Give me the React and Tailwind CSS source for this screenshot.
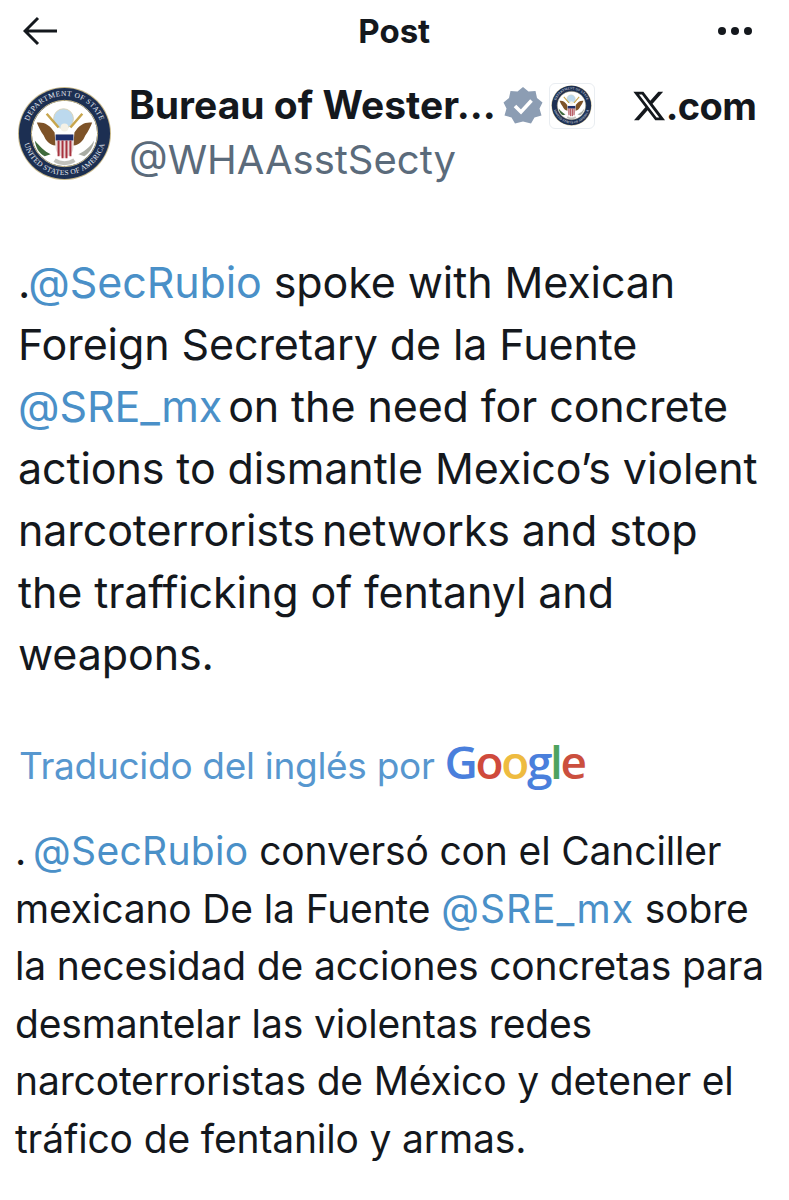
const SANS = "font-['Inter','Liberation_Sans',sans-serif]";

function Seal({ size, uid }) {
  return (
    <svg width={size} height={size} viewBox="0 0 96 96">
      <circle cx="48" cy="48" r="47" fill="#c9b98a" />
      <circle cx="48" cy="48" r="46" fill="#1c2f52" />
      <circle cx="48" cy="48" r="33" fill="#ffffff" />
      <circle cx="48" cy="48" r="33.5" fill="none" stroke="#c9b98a" strokeWidth="1" />
      <defs>
        <path id={`${uid}-top`} d="M 10 48 A 38 38 0 0 1 86 48" />
        <path id={`${uid}-bot`} d="M 6 48 A 42 42 0 0 0 90 48" />
      </defs>
      <text fontSize="7.5" fill="#e8ecf2" fontFamily="Liberation Serif, serif" letterSpacing="0.5">
        <textPath href={`#${uid}-top`} startOffset="50%" textAnchor="middle">DEPARTMENT OF STATE</textPath>
      </text>
      <text fontSize="7.5" fill="#e8ecf2" fontFamily="Liberation Serif, serif" letterSpacing="0.3">
        <textPath href={`#${uid}-bot`} startOffset="50%" textAnchor="middle">UNITED STATES OF AMERICA</textPath>
      </text>
      <circle cx="47" cy="33" r="10" fill="#bcd9ee" stroke="#d8d2b8" strokeWidth="1" />
      <path d="M20 37 C27 36 33 39 38 47 L39 60 C33 60 29 55 27 50 C24 46 22 42 20 37Z" fill="#7d5228" />
      <path d="M76 37 C69 36 63 39 58 47 L57 60 C63 60 67 55 69 50 C72 46 74 42 76 37Z" fill="#7d5228" />
      <path d="M30 28 L42 42 M66 28 L54 42" stroke="#c8a64e" strokeWidth="2.5" />
      <circle cx="48" cy="42" r="4" fill="#f4f1e6" />
      <path d="M39 49 H57 V62 C57 68 52 71 48 73 C44 71 39 68 39 62Z" fill="#e8d9d9" />
      <path d="M39 49 H57 V55 H39Z" fill="#1d2f6b" />
      <path d="M42 55 V71 M46 55 V73 M50 55 V73 M54 55 V71" stroke="#a8323e" strokeWidth="2" />
      <path d="M18 55 C22 60 28 66 34 69 L28 71 C22 68 19 62 18 55Z" fill="#3f6b3c" />
      <path d="M78 55 C75 60 70 65 62 69 L68 71 C73 68 77 62 78 55Z" fill="#a9aca4" />
      <path d="M38 75 C44 79 52 79 58 75" stroke="#c2c2bd" strokeWidth="4" fill="none" />
    </svg>
  );
}

function At({ children }) {
  return <span className="text-[#4a90c8]">{children}</span>;
}

export default function App() {
  return (
    <div className={`w-[789px] h-[1200px] overflow-hidden bg-white text-[#14181d] ${SANS}`}>
      {/* top bar */}
      <div className="flex h-[62px] items-center justify-between pl-[23px] pr-[37px]">
        <svg width="35" height="30" viewBox="0 0 35 30" fill="none" stroke="#14181d" strokeWidth="3">
          <path d="M34 15 H2 M15 2 L2 15 L15 28" />
        </svg>
        <div className="pl-[12px] text-[33px] font-bold leading-none">Post</div>
        <div className="flex gap-[5.5px]">
          <span className="size-[7.5px] rounded-full bg-[#14181d]" />
          <span className="size-[7.5px] rounded-full bg-[#14181d]" />
          <span className="size-[7.5px] rounded-full bg-[#14181d]" />
        </div>
      </div>

      {/* author */}
      <div className="flex items-center pl-[17px] pt-[22px]">
        <Seal size={95} uid="large" />
        <div className="ml-[17px] flex flex-col">
          <div className="flex h-[43px] items-center">
            <span className="whitespace-nowrap text-[39px] font-bold">Bureau of Wester...</span>
            <svg className="ml-[7px]" width="40" height="40" viewBox="0 0 40 40">
              <path d="M20 1 L25.5 5.5 L32.5 5 L34 12 L39.5 16.5 L36.5 22.5 L38.5 29.5 L31.5 31.5 L28 37.5 L20 35.5 L12 37.5 L8.5 31.5 L1.5 29.5 L3.5 22.5 L0.5 16.5 L6 12 L7.5 5 L14.5 5.5Z" fill="#8c9db3" />
              <path d="M12 20 L18 26 L28.5 14.5" fill="none" stroke="#ffffff" strokeWidth="3.6" />
            </svg>
            <span className="ml-[6px] flex size-[46px] items-center justify-center rounded-md border border-[#e9edf1]">
              <Seal size={41} uid="small" />
            </span>
            <svg className="ml-[38px]" width="33" height="30" viewBox="1 2 22.5 20" fill="#14181d">
              <path d="M18.244 2.25h3.308l-7.227 8.26 8.502 11.24H16.17l-5.214-6.817L4.99 21.75H1.68l7.73-8.835L1.254 2.25H8.08l4.713 6.231zm-1.161 17.52h1.833L7.084 4.126H5.117z" />
            </svg>
            <span className="text-[38px] font-bold leading-none tracking-[-0.6px]">.com</span>
          </div>
          <div className="mt-[11px] text-[40px] leading-[44px] text-[#5b6b7b]">@WHAAsstSecty</div>
        </div>
      </div>

      {/* tweet */}
      <div className="pl-[18px] pt-[69px] text-[43px] leading-[62px] tracking-[-0.1px] whitespace-nowrap">
        <div>.<span className="ml-[-2px]"><At>@SecRubio</At></span> spoke with Mexican</div>
        <div>Foreign Secretary de la Fuente</div>
        <div><At>@SRE_mx</At><span className="ml-[6px]">on the need for concrete</span></div>
        <div>actions to dismantle Mexico’s violent</div>
        <div><span className="mr-[-5px]">narcoterrorists</span> networks and stop</div>
        <div>the trafficking of fentanyl and</div>
        <div>weapons.</div>
      </div>

      {/* translated by */}
      <div className="flex items-baseline pl-[19px] pt-[52px] text-[37px] leading-[48px] tracking-[-0.3px] text-[#5797cf] whitespace-nowrap">
        <span>Traducido del inglés por</span>
        <span className="ml-[10px] font-['Open_Sans',sans-serif] text-[46px] font-semibold tracking-[-2.4px]">
          <span className="text-[#4a7fdc]">G</span>
          <span className="text-[#cf4a3c]">o</span>
          <span className="text-[#eebb40]">o</span>
          <span className="text-[#4a7fdc]">g</span>
          <span className="text-[#4ea35f]">l</span>
          <span className="text-[#cb4f3e]">e</span>
        </span>
      </div>

      {/* translation */}
      <div className="pl-[15px] pt-[32px] text-[39px] leading-[57.5px] tracking-[-0.15px] whitespace-nowrap">
        <div>.<span className="ml-[7px] tracking-[0.3px]"><At>@SecRubio</At></span> conversó con el Canciller</div>
        <div>mexicano De la Fuente <span className="tracking-[1px]"><At>@SRE_mx</At></span> sobre</div>
        <div>la necesidad de acciones concretas para</div>
        <div>desmantelar las violentas redes</div>
        <div>narcoterroristas de México y detener el</div>
        <div>tráfico de fentanilo y armas.</div>
      </div>
    </div>
  );
}
